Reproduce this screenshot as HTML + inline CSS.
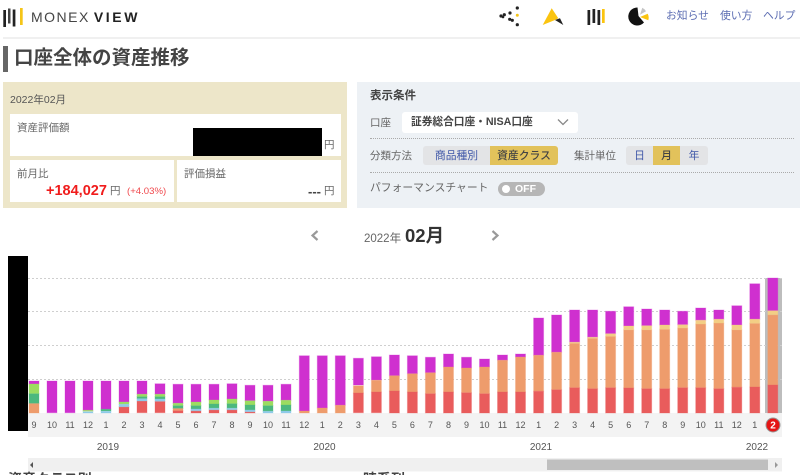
<!DOCTYPE html>
<html lang="ja"><head><meta charset="utf-8"><title>MONEX VIEW</title>
<style>
html,body{margin:0;padding:0;background:#fff;width:800px;height:475px;overflow:hidden}
body{font-family:"Liberation Sans","Noto Sans CJK JP",sans-serif;color:#555}
#r{position:absolute;left:0;top:0;width:800px;height:475px;overflow:hidden}
.a{position:absolute;white-space:nowrap}
.w{position:absolute;background:#fff}
.seg{position:absolute;top:146px;height:19px;line-height:20px;text-align:center;font-size:10.8px;background:#e3e4e6;color:#3f57a8}
.on{background:#e2c25b;color:#444;font-weight:500}
.lbl{font-size:10.5px;color:#666}
</style></head><body><div id="r">
<svg class="a" style="left:0;top:0" width="120" height="36"><rect x="3.300" y="10" width="2.700" height="17" fill="#222"/><rect x="8" y="8.500" width="2.500" height="15" fill="#444"/><rect x="12.700" y="9.500" width="2.700" height="17" fill="#222"/><rect x="20" y="8" width="2.700" height="17" fill="#f5c518"/></svg>
<div class="a" style="left:31px;top:9px;font-size:14px;line-height:17px;letter-spacing:1.500px;color:#444">MONEX<b style="color:#222;letter-spacing:2.600px;margin-left:4px">VIEW</b></div>
<svg class="a" style="left:495px;top:2px" width="170" height="30">
<g fill="#222"><circle cx="6" cy="14" r="1.600"/><circle cx="9.300" cy="12.700" r="1.600"/><circle cx="8" cy="15" r="1.300"/><circle cx="15" cy="11" r="1.600"/><circle cx="22.300" cy="6" r="1.600"/><circle cx="14.700" cy="17.300" r="1.600"/><circle cx="17.300" cy="18.300" r="1.600"/><circle cx="22.300" cy="22.700" r="1.600"/></g><circle cx="22.300" cy="13.300" r="1.500" fill="#f5c518"/>
<path d="M47.700 23L56.700 6.300L63.300 16.300L60 18Z" fill="#fbc40f"/><path d="M60 18L65 16.300L68.300 23Z" fill="#222"/>
<g fill="#222"><rect x="92.500" y="8" width="2.700" height="15"/><rect x="97.500" y="7" width="2.700" height="14"/><rect x="102.500" y="8" width="2.700" height="15"/></g><rect x="107" y="7" width="2.700" height="14" fill="#fbc40f"/>
<path d="M143.500 14L142.500 5.500A9 9 0 1 0 149 20.500Z" fill="#111"/><path d="M145 12.700L147.300 5.700A9 9 0 0 1 151 9.300Z" fill="#c4c4c4"/><path d="M145 15L152.700 11.700A9 9 0 0 1 153.300 18.300Z" fill="#fbc40f"/>
</svg>
<div class="a" style="left:666px;top:9px;font-size:10.800px;line-height:15px;color:#5b6cb2">お知らせ</div>
<div class="a" style="left:720px;top:9px;font-size:10.800px;line-height:15px;color:#5b6cb2">使い方</div>
<div class="a" style="left:763px;top:9px;font-size:10.800px;line-height:15px;color:#5b6cb2">ヘルプ</div>
<div class="a" style="left:3px;top:37px;width:797px;height:2px;background:#f0f0f0"></div>

<div class="a" style="left:3px;top:46px;width:5px;height:26px;background:#666"></div>
<div class="a" style="left:14px;top:45px;font-size:19.500px;line-height:26px;font-weight:700;color:#444">口座全体の資産推移</div>

<div class="a" style="left:3px;top:82px;width:344px;height:126px;background:#ede6c9"></div>
<div class="a lbl" style="left:10px;top:92px;line-height:16px;color:#555">2022年02月</div>
<div class="w" style="left:10px;top:114px;width:331px;height:42px"></div>
<div class="w" style="left:10px;top:160px;width:164px;height:42px"></div>
<div class="w" style="left:177px;top:160px;width:164px;height:42px"></div>
<div class="a lbl" style="left:17px;top:121px;line-height:15px">資産評価額</div>
<div class="a" style="left:193px;top:128px;width:129px;height:28px;background:#000"></div>
<div class="a lbl" style="left:324px;top:138px;line-height:15px">円</div>
<div class="a lbl" style="left:17px;top:167px;line-height:15px">前月比</div>
<div class="a" style="left:46px;top:182px;font-size:14.500px;line-height:18px;font-weight:700;color:#f01c1c">+184,027</div>
<div class="a lbl" style="left:110px;top:184px;line-height:15px">円</div>
<div class="a" style="left:127px;top:185px;font-size:9.600px;line-height:14px;color:#f0484c">(+4.03%)</div>
<div class="a lbl" style="left:184px;top:167px;line-height:15px">評価損益</div>
<div class="a" style="left:308px;top:184px;font-size:13px;line-height:15px;font-weight:700;color:#444">---</div>
<div class="a lbl" style="left:324px;top:184px;line-height:15px">円</div>

<div class="a" style="left:357px;top:82px;width:443px;height:126px;background:#edf1f5"></div>
<div class="a" style="left:370px;top:88px;font-size:11.500px;line-height:16px;font-weight:700;color:#444">表示条件</div>
<div class="a lbl" style="left:370px;top:116px;line-height:15px">口座</div>
<div class="a" style="left:402px;top:112px;width:176px;height:21px;background:#fff;border-radius:3px"></div>
<div class="a" style="left:411px;top:114px;font-size:10.700px;line-height:16px;font-weight:700;color:#444">証券総合口座・NISA口座</div>
<svg class="a" style="left:556px;top:117px" width="14" height="10"><path d="M2 2.500L7 7.500L12 2.500" fill="none" stroke="#888" stroke-width="1.300"/></svg>
<div class="a" style="left:370px;top:138px;width:424px;border-top:1px dotted #aaa"></div>
<div class="a" style="left:370px;top:172px;width:424px;border-top:1px dotted #aaa"></div>
<div class="a lbl" style="left:370px;top:149px;line-height:15px">分類方法</div>
<div class="seg" style="left:423px;width:67px;border-radius:3px 0 0 3px">商品種別</div>
<div class="seg on" style="left:490px;width:68px;border-radius:0 3px 3px 0">資産クラス</div>
<div class="a lbl" style="left:574px;top:149px;line-height:15px">集計単位</div>
<div class="seg" style="left:626px;width:27px;border-radius:3px 0 0 3px">日</div>
<div class="seg on" style="left:653px;width:27px">月</div>
<div class="seg" style="left:680px;width:28px;border-radius:0 3px 3px 0">年</div>
<div class="a" style="left:370px;top:181px;font-size:10.800px;line-height:15px;color:#666">パフォーマンスチャート</div>
<div class="a" style="left:498px;top:182px;width:47px;height:14px;border-radius:7px;background:#b6b6b6"></div>
<div class="a" style="left:502px;top:185px;width:8px;height:8px;border-radius:50%;background:#fff"></div>
<div class="a" style="left:515px;top:182px;font-size:10.500px;line-height:14px;font-weight:700;color:#fff">OFF</div>

<svg class="a" style="left:310px;top:229px" width="12" height="14"><path d="M7.500 2L2.500 6.500L7.500 11" fill="none" stroke="#999" stroke-width="2.200"/></svg>
<div class="a" style="left:364px;top:232px;font-size:11.500px;line-height:15px;color:#666">2022年</div>
<div class="a" style="left:405px;top:225px;font-size:18.500px;line-height:22px;font-weight:700;color:#333">02月</div>
<svg class="a" style="left:490px;top:229px" width="12" height="14"><path d="M2.500 2L7.500 6.500L2.500 11" fill="none" stroke="#999" stroke-width="2.200"/></svg>

<svg class="a" style="left:0;top:0" width="800" height="475" font-family="Liberation Sans, sans-serif">
<rect x="765" y="278" width="17" height="135" fill="#bdbdbd"/>
<g stroke="#cfcfcf" stroke-dasharray="2 2" stroke-width="1"><path d="M28 278.500H782M28 311.500H782M28 345.500H782M28 379.500H782"/></g>
<rect x="28" y="413" width="754" height="24" fill="#f3f3f3"/>
<rect x="8" y="256" width="20" height="175" fill="#000"/>
<g stroke-width="1" stroke-opacity=".3">
<path fill="#cf30cf" stroke="#cf30cf" d="M29 381h10V384h-10zM47 381h10V412.700h-10zM65 381h10V412.700h-10zM83 381h10V410.300h-10zM101 381h10V409.300h-10zM119 381h10V402h-10zM137 381h10V394.300h-10zM155 383.700h10V394.300h-10zM173 384.300h10V403.300h-10zM191 384.300h10V402h-10zM209 384.300h10V400h-10zM227 383.700h10V399h-10zM245 385.300h10V400.700h-10zM263 385.300h10V401.300h-10zM281 384.300h10V400.300h-10zM299.300 355.700h10V411h-10zM317.300 355.700h10V408h-10zM335.300 355.700h10V405.300h-10zM353.400 358.300h10V385h-10zM371.400 356.700h10V380h-10zM389.400 355h10V375.700h-10zM407.400 355.700h10V373.700h-10zM425.400 357.300h10V372.700h-10zM443.500 354h10V367h-10zM461.500 357.300h10V368h-10zM479.500 359h10V367h-10zM497.500 355h10V360.300h-10zM515.500 354h10V357h-10zM533.600 318h10V355.300h-10zM551.600 315h10V352.300h-10zM569.600 310h10V342.300h-10zM587.600 310h10V337.300h-10zM605.600 311.300h10V333.700h-10zM623.700 306.700h10V326h-10zM641.700 309h10V325.700h-10zM659.700 310h10V325h-10zM677.700 311.300h10V324.700h-10zM695.700 308h10V320.300h-10zM713.800 310h10V319.300h-10zM731.800 305.700h10V325h-10zM749.800 283.700h10V319.300h-10zM767.800 278h10V310.700h-10z"/>
<path fill="#ee9c6c" stroke="#ee9c6c" d="M29 403.300h10V413h-10zM173 408.300h10V410.700h-10zM299.300 411h10V413h-10zM317.300 408h10V413h-10zM335.300 405.300h10V413h-10zM353.400 385.700h10V393h-10zM371.400 380.300h10V392h-10zM389.400 375.700h10V391h-10zM407.400 373.700h10V392h-10zM425.400 372.700h10V393.700h-10zM443.500 367h10V392h-10zM461.500 368h10V392.700h-10zM479.500 367h10V393.700h-10zM497.500 360.300h10V392h-10zM515.500 357h10V392h-10zM533.600 355.300h10V391.300h-10zM551.600 352.300h10V389.700h-10zM569.600 343.300h10V387.700h-10zM587.600 338.300h10V388.700h-10zM605.600 336.300h10V387.700h-10zM623.700 329.700h10V388h-10zM641.700 329.700h10V388.700h-10zM659.700 329.300h10V388.700h-10zM677.700 328h10V387.700h-10zM695.700 324h10V387.700h-10zM713.800 323h10V388.700h-10zM731.800 329.700h10V387.300h-10zM749.800 323.300h10V387h-10zM767.800 314.700h10V385h-10z"/>
<path fill="#e95c5c" stroke="#e95c5c" d="M119 406.700h10V413h-10zM137 401h10V412.700h-10zM155 401.300h10V412.700h-10zM173 410.700h10V413h-10zM191 410.700h10V413h-10zM209 409.700h10V413h-10zM227 409.700h10V413h-10zM245 411.700h10V413h-10zM353.400 393h10V412.700h-10zM371.400 392h10V412.700h-10zM389.400 391h10V413h-10zM407.400 392h10V413h-10zM425.400 393.700h10V413h-10zM443.500 392h10V413h-10zM461.500 392.700h10V413h-10zM479.500 393.700h10V413h-10zM497.500 392h10V413h-10zM515.500 392h10V413h-10zM533.600 391.300h10V413h-10zM551.600 389.700h10V413h-10zM569.600 387.700h10V413h-10zM587.600 388.700h10V413h-10zM605.600 387.700h10V413h-10zM623.700 388h10V413h-10zM641.700 388.700h10V413h-10zM659.700 388.700h10V413h-10zM677.700 387.700h10V413h-10zM695.700 387.700h10V413h-10zM713.800 388.700h10V413h-10zM731.800 387.300h10V413h-10zM749.800 387h10V413h-10zM767.800 385h10V413h-10z"/>
<path fill="#f3ce85" stroke="#f3ce85" d="M569.600 342.300h10V343.300h-10zM587.600 337.300h10V338.300h-10zM605.600 333.700h10V336.300h-10zM623.700 326h10V329.700h-10zM641.700 325.700h10V329.700h-10zM659.700 325h10V329.300h-10zM677.700 324.700h10V328h-10zM695.700 320.300h10V324h-10zM713.800 319.300h10V323h-10zM731.800 325h10V329.700h-10zM749.800 319.300h10V323.300h-10zM767.800 310.700h10V314.700h-10z"/>
<path fill="#9cdc60" stroke="#9cdc60" d="M29 384h10V393.700h-10zM83 410.300h10V411.300h-10zM119 402h10V404.300h-10zM137 394.300h10V396.700h-10zM155 394.300h10V396.700h-10zM173 403.300h10V405.700h-10zM191 402h10V405.700h-10zM209 400h10V404h-10zM227 399h10V403.700h-10zM245 400.700h10V405h-10zM263 401.300h10V405.700h-10zM281 400.300h10V405h-10z"/>
<path fill="#4cb87e" stroke="#4cb87e" d="M29 393.700h10V403.300h-10zM101 409.300h10V411h-10zM137 396.700h10V398.700h-10zM155 396.700h10V399h-10zM173 405.700h10V408.300h-10zM191 405.700h10V409h-10zM209 404h10V408.300h-10zM227 403.700h10V408.300h-10zM245 405h10V410h-10zM263 405.700h10V411.300h-10zM281 405h10V411h-10z"/>
<path fill="#8fcbe8" stroke="#8fcbe8" d="M83 411.700h10V413h-10zM101 411.300h10V413h-10zM119 404.300h10V406.700h-10zM137 398.700h10V401h-10zM155 399h10V401.300h-10zM191 409h10V410.700h-10zM209 408.300h10V409.700h-10zM227 408.300h10V409.700h-10zM245 410h10V411.700h-10zM263 411.300h10V413h-10zM281 411h10V413h-10z"/>
</g>
<g font-size="9" fill="#555" text-anchor="middle">
<text x="34" y="428">9</text><text x="52" y="428">10</text><text x="70" y="428">11</text><text x="88" y="428">12</text><text x="106" y="428">1</text><text x="124" y="428">2</text><text x="142" y="428">3</text><text x="160" y="428">4</text><text x="178" y="428">5</text><text x="196" y="428">6</text><text x="214" y="428">7</text><text x="232" y="428">8</text><text x="250" y="428">9</text><text x="268" y="428">10</text><text x="286" y="428">11</text><text x="304.300" y="428">12</text><text x="322.300" y="428">1</text><text x="340.300" y="428">2</text><text x="358.400" y="428">3</text><text x="376.400" y="428">4</text><text x="394.400" y="428">5</text><text x="412.400" y="428">6</text><text x="430.400" y="428">7</text><text x="448.500" y="428">8</text><text x="466.500" y="428">9</text><text x="484.500" y="428">10</text><text x="502.500" y="428">11</text><text x="520.500" y="428">12</text><text x="538.600" y="428">1</text><text x="556.600" y="428">2</text><text x="574.600" y="428">3</text><text x="592.600" y="428">4</text><text x="610.600" y="428">5</text><text x="628.700" y="428">6</text><text x="646.700" y="428">7</text><text x="664.700" y="428">8</text><text x="682.700" y="428">9</text><text x="700.700" y="428">10</text><text x="718.800" y="428">11</text><text x="736.800" y="428">12</text><text x="754.800" y="428">1</text>
</g>
<circle cx="773" cy="425" r="7" fill="#e51515" stroke="#999" stroke-width="1"/>
<text x="773" y="428.500" font-size="10" font-weight="700" fill="#fff" text-anchor="middle">2</text>
<g font-size="10" fill="#555" text-anchor="middle"><text x="108" y="450">2019</text><text x="324.500" y="450">2020</text><text x="541" y="450">2021</text><text x="757" y="450">2022</text></g>
<rect x="28" y="458" width="754" height="13.500" fill="#f0f0f0"/>
<rect x="547" y="459.500" width="221" height="10.500" fill="#bfbfbf"/>
<path d="M33 462V468L30 465Z" fill="#555"/><path d="M775 462V468L778 465Z" fill="#999"/>
</svg>
<div class="a" style="left:8px;top:470px;font-size:14px;line-height:18px;font-weight:700;color:#444">資産クラス別</div>
<div class="a" style="left:363px;top:470px;font-size:14px;line-height:18px;font-weight:700;color:#444">時系列</div>
</div></body></html>
